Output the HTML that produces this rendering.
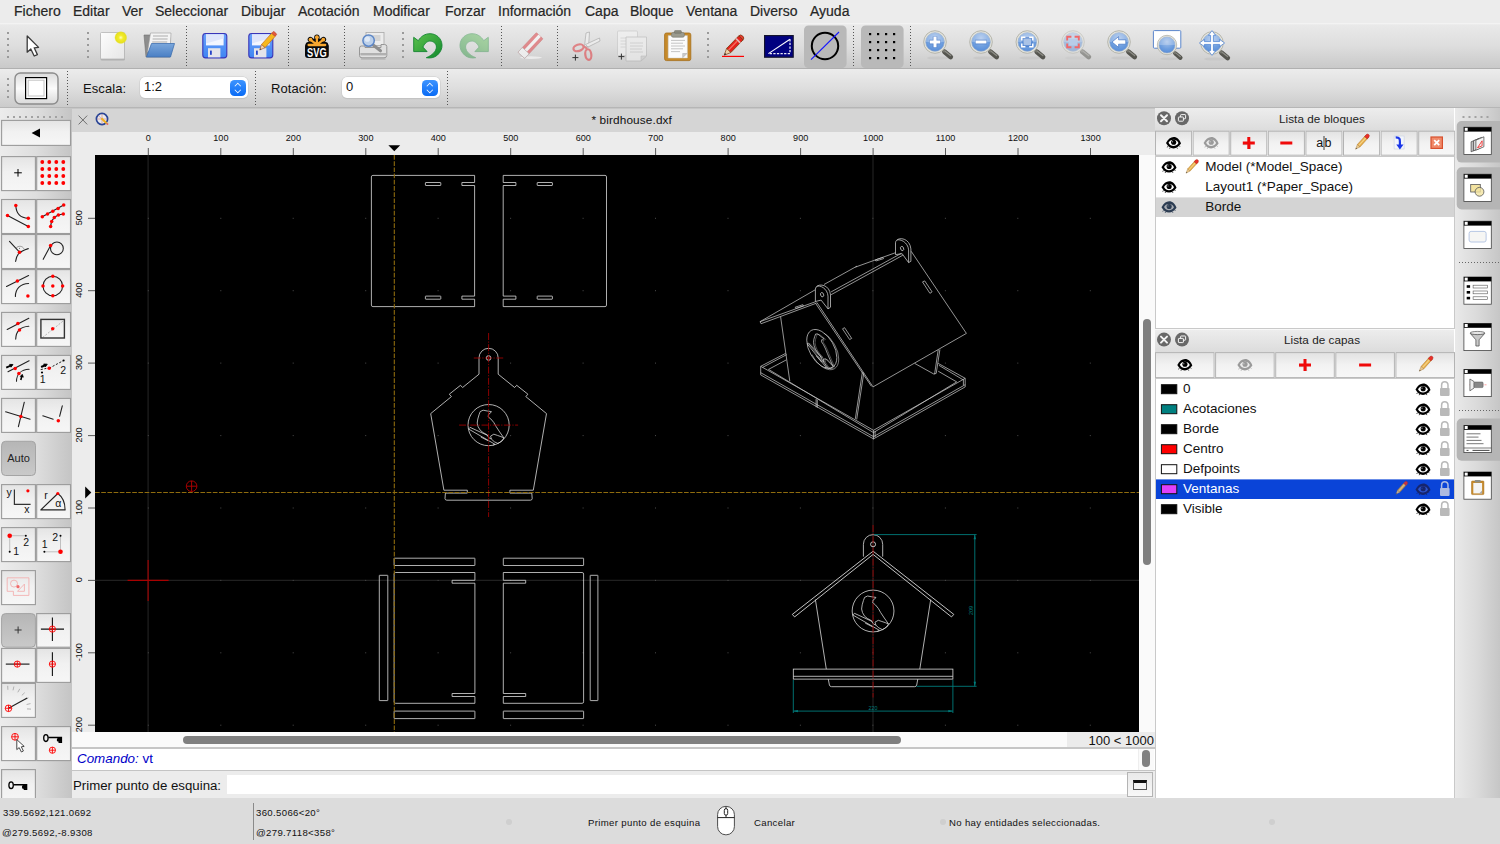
<!DOCTYPE html>
<html><head><meta charset="utf-8"><title>QCAD</title>
<style>
*{box-sizing:border-box;margin:0;padding:0}
html,body{width:1500px;height:844px;overflow:hidden;background:#dcdcdc;font-family:"Liberation Sans",sans-serif;color:#1e1e1e}
.abs,#app *{position:absolute}
#app{position:relative;width:1500px;height:844px;overflow:hidden}
#menubar{left:0;top:0;width:1500px;height:23px;background:#ececec}
#menubar span{top:3px;font-size:14px;letter-spacing:0px;-webkit-text-stroke:0.2px #262626;line-height:17px;color:#262626;white-space:nowrap}
#tb1{left:0;top:23px;width:1500px;height:46px;background:linear-gradient(#f6f6f6 0,#e9e9e9 2px,#dedede 50%,#c9c9c9 100%);border-bottom:1px solid #b0b0b0}
#tb2{left:0;top:69px;width:1500px;height:39px;background:linear-gradient(#ececec,#dedede 50%,#cbcbcb);border-bottom:1px solid #b6b6b6}
.vdots{width:2px;border-left:1.5px dotted #8e8e8e}
#lefttb{left:0;top:108px;width:72px;height:690px;background:linear-gradient(90deg,#ececec,#dedede 50%,#c4c4c4)}
#tabbar{left:72px;top:108px;width:1083px;height:24px;background:#d5d5d5;box-shadow:inset 0 1px 0 #c6c6c6}
#rulerT{left:72px;top:132px;width:1083px;height:23px;background:#ececec}
#rulerL{left:72px;top:155px;width:23px;height:577px;background:#ececec}
#canvas{left:95px;top:155px;width:1044px;height:577px;background:#000}
#vscroll{left:1139px;top:155px;width:16px;height:577px;background:#fafafa}
#hscroll{left:72px;top:732px;width:1083px;height:17px;background:#fafafa}
#rightpanel{left:1155px;top:108px;width:299.5px;height:690px;background:#fff}
#righttb{left:1454.5px;top:108px;width:45.5px;height:690px;background:linear-gradient(90deg,#e9e9e9,#dadada 50%,#c6c6c6)}
#status{left:0;top:798px;width:1500px;height:46px;background:#dcdcdc}

#tb2 span{position:absolute}
#tb2>span{top:12px !important}
.combo{height:21px;background:#fff;border-radius:5px;box-shadow:0 0 0 0.5px #c9c9c9,0 1px 1px rgba(0,0,0,.12)}
.combo span{left:4px;top:2px;font-size:13px;line-height:15px;color:#111}
.combo i{right:2px;top:3px;width:16px;height:16px;border-radius:4.5px;background:linear-gradient(#3d94ff,#0a6cf5)}
.combo i:before{content:"";position:absolute;left:4.6px;top:3.2px;width:4.6px;height:4.6px;border-left:1.6px solid #fff;border-top:1.6px solid #fff;transform:rotate(45deg) scale(.78)}
.combo i:after{content:"";position:absolute;left:4.6px;top:7px;width:4.6px;height:4.6px;border-right:1.6px solid #fff;border-bottom:1.6px solid #fff;transform:rotate(45deg) scale(.78)}

.st{font-size:9.6px;line-height:12px;color:#111;white-space:nowrap;letter-spacing:0.34px;margin-top:1.2px}
.dot{width:6px;height:6px;border-radius:3px;background:#cfcfcf}
.rt{font-size:9.5px;color:#111;white-space:nowrap}
</style></head><body>
<div id="app">
<div id="menubar">
<span style="left:14px">Fichero</span><span style="left:73px">Editar</span><span style="left:122px">Ver</span><span style="left:155px">Seleccionar</span><span style="left:241px">Dibujar</span><span style="left:298px">Acotación</span><span style="left:373px">Modificar</span><span style="left:445px">Forzar</span><span style="left:498px">Información</span><span style="left:585px">Capa</span><span style="left:630px">Bloque</span><span style="left:686px">Ventana</span><span style="left:750px">Diverso</span><span style="left:810px">Ayuda</span>
</div>
<div id="tb1"><svg style="left:0;top:0" width="1500" height="46" viewBox="0 23 1500 46">
<defs>
<linearGradient id="gPaper" x1="0" y1="0" x2="1" y2="1"><stop offset="0" stop-color="#fdfdfd"/><stop offset="1" stop-color="#e6e6e6"/></linearGradient>
<linearGradient id="gFolder" x1="0" y1="0" x2="0" y2="1"><stop offset="0" stop-color="#7aa7dc"/><stop offset="1" stop-color="#4a7fc4"/></linearGradient>
<linearGradient id="gDisk" x1="0" y1="0" x2="0" y2="1"><stop offset="0" stop-color="#6aa2fb"/><stop offset="1" stop-color="#3f84f2"/></linearGradient>
<radialGradient id="gLens" cx="0.5" cy="0.3" r="0.8"><stop offset="0" stop-color="#a8c3ea"/><stop offset="0.55" stop-color="#6f9fdf"/><stop offset="1" stop-color="#4f86d6"/></radialGradient>
<radialGradient id="gGlow"><stop offset="0" stop-color="#ffffc0"/><stop offset="0.35" stop-color="#f3ec2a"/><stop offset="0.8" stop-color="#e6e020"/><stop offset="1" stop-color="#e6e020" stop-opacity="0"/></radialGradient>
<linearGradient id="gUndo" x1="0" y1="0" x2="1" y2="1"><stop offset="0" stop-color="#5cc24c"/><stop offset="1" stop-color="#138a2e"/></linearGradient>
<g id="mag">
  <ellipse cx="3" cy="16" rx="11" ry="1.6" fill="#888" opacity="0.13"/>
  <path d="M9.6 9.8 L15.6 14.8" stroke="#55554f" stroke-width="5" stroke-linecap="round"/><path d="M7 7.2 L10 9.8" stroke="#77776f" stroke-width="2.6"/>
  <path d="M10.4 9.4 L15.6 13.6" stroke="#8d8d86" stroke-width="1.3" stroke-linecap="round"/>
  <circle cx="0" cy="0" r="11.3" fill="#e4e4dc" stroke="#a9a99f" stroke-width="0.8"/>
  <circle cx="0" cy="0" r="9.3" fill="url(#gLens)" stroke="#8fa6c8" stroke-width="0.6"/>
  <path d="M-9.3 0 A9.3 9.3 0 0 1 9.3 0 Z" fill="#fff" opacity="0.22"/>
</g>
<g id="hdl"><rect x="0" y="0" width="2" height="2"/><rect x="0" y="6" width="2" height="2"/><rect x="0" y="12" width="2" height="2"/><rect x="0" y="18" width="2" height="2"/><rect x="0" y="24" width="2" height="2"/></g>
</defs>
<!-- handles -->
<g fill="#9a9a9a"><use href="#hdl" x="7" y="32"/><use href="#hdl" x="87" y="32"/><use href="#hdl" x="402" y="32"/><use href="#hdl" x="707" y="32"/></g>
<!-- separators -->
<g stroke="#555" stroke-width="1" stroke-dasharray="1 2"><path d="M186.5 26v40M288.5 26v40M344.5 26v40M501.5 26v40M557.5 26v40M853.5 26v40M910.5 26v40"/></g>
<!-- arrow -->
<path d="M27.2 36 L27.2 52.2 L30.8 49 L34.2 56 L37.4 54.6 L34.2 47.8 L38.6 47.4 Z" fill="#fff" stroke="#3a3a3a" stroke-width="1.3" stroke-linejoin="round"/>
<!-- new -->
<rect x="100.5" y="33" width="24.5" height="27.5" rx="1.5" fill="#9a9a9a" opacity="0.6"/>
<rect x="100.5" y="32.5" width="24" height="26.5" rx="1" fill="url(#gPaper)" stroke="#b5b5b5" stroke-width="0.8"/>
<circle cx="120.8" cy="37.6" r="6.6" fill="url(#gGlow)"/>
<!-- open -->
<path d="M144 35 L154 35 L156 37.5 L170 37.5 L170 57 L146 57 Z" fill="#8d8d8d" stroke="#6e6e6e" stroke-width="0.6"/>
<path d="M150.5 33 L171 33 L170 52 L147.5 52 Z" fill="#f4f4f4" stroke="#9a9a9a" stroke-width="0.6"/>
<path d="M153 36h15M152.6 39h15M152.2 42h15" stroke="#c4c4c4" stroke-width="1.4"/>
<path d="M151.5 43.5 L174.5 43.5 L170.5 57 L146.5 57 Z" fill="url(#gFolder)" stroke="#3f6fae" stroke-width="0.8" stroke-linejoin="round"/>
<!-- save -->
<g id="disk">
<rect x="202.8" y="33.5" width="24" height="24.4" rx="2.8" fill="url(#gDisk)" stroke="#3a35b8" stroke-width="1.1"/>
<rect x="206" y="34.4" width="17.6" height="11" fill="#f3f6ff"/>
<path d="M206 34.4h17.6v4l-17.6 5z" fill="#dfe6fb"/>
<rect x="208" y="48.2" width="12.4" height="9.2" fill="#e4e4ea"/>
<rect x="210" y="50.6" width="1.8" height="4.2" fill="#2743c8"/>
</g>
<!-- save as -->
<use href="#disk" x="46"/>
<g transform="translate(265.3,43.8) rotate(42) scale(1.02)">
<rect x="-2.3" y="-12" width="4.6" height="15" fill="#f6b81e" stroke="#c9761a" stroke-width="0.7"/>
<rect x="-2.3" y="-14.6" width="4.6" height="2.8" rx="1" fill="#e25a3c" stroke="#b83c24" stroke-width="0.5"/>
<path d="M-2.3 3 L0 8.2 L2.3 3 Z" fill="#f0d6b0" stroke="#b05a2a" stroke-width="0.6"/>
<path d="M-0.7 6.4 L0 8.2 L0.7 6.4 Z" fill="#333"/>
</g>
<!-- svg icon -->
<g>
<rect x="305" y="43.6" width="23.8" height="14.4" rx="3" fill="#0a0a0a"/>
<g stroke="#0a0a0a" stroke-width="5.4" stroke-linecap="round"><path d="M316.9 45 V37.3M316.9 45 L310.4 39.6M316.9 45 L323.4 39.6M316.9 45 L308.3 44.6M316.9 45 L325.5 44.6"/></g>
<g stroke="#f8a72f" stroke-width="2.3" stroke-linecap="round"><path d="M316.9 44.6 V37.3M316.9 44.6 L310.6 39.8M316.9 44.6 L323.2 39.8M308.6 45 H325.2"/></g>
<circle cx="316.9" cy="37.2" r="1.9" fill="#f8a72f"/><circle cx="310.5" cy="39.7" r="1.9" fill="#f8a72f"/><circle cx="323.3" cy="39.7" r="1.9" fill="#f8a72f"/>
<text x="316.9" y="57.2" font-family="Liberation Sans" font-weight="bold" font-size="13" text-anchor="middle" fill="#fff" textLength="19.6" lengthAdjust="spacingAndGlyphs">SVG</text>
</g>
<!-- print preview -->
<g>
<rect x="366" y="32.4" width="18" height="13" fill="#ececec" stroke="#a8a8a8" stroke-width="0.8"/>
<rect x="369.5" y="35" width="11" height="6" fill="#d4d4d4"/>
<path d="M361.5 46 Q359.5 46 359.5 48 L359.5 55.5 Q359.5 57.8 362 57.8 L384 57.8 Q386.8 57.8 386.8 55.5 L386.8 46.5 Q386.8 44.5 384.5 44.5 L381 44.5 L381 47.5 L365 47.5 L365 46 Z" fill="#e0e0e0" stroke="#8f8f8f" stroke-width="0.9"/>
<path d="M360.4 54.2 H386" stroke="#b0b0b0" stroke-width="2.4"/><path d="M361 59 H385.5" stroke="#9a9a9a" stroke-width="1.2" opacity=".6"/>
<path d="M372.5 44.5 L380.5 50.8" stroke="#8e8e8e" stroke-width="3" stroke-linecap="round"/>
<circle cx="368.6" cy="40.6" r="5.7" fill="#bcd0ea" stroke="#5c86c6" stroke-width="1.5"/>
<circle cx="367.4" cy="39.2" r="2.6" fill="#dfe9f6"/>
</g>
<!-- undo -->
<path d="M413.7 37.3 L413.7 51.6 L427.1 51.6 L422.9 47.1 C425 42.5 428 41 430.2 41.1 C434 41.3 436.6 44 436.4 47.2 C436.2 51.5 432 55.5 426.3 57.7 C430 58.4 434.5 57.8 437.5 55 C440.6 52 442.2 48.5 442 45 C441.6 38 436 33.7 430 33.7 C424.8 33.7 420.8 36.5 418.3 40.7 Z" fill="url(#gUndo)" stroke="#128530" stroke-width="0.9" stroke-linejoin="round"/>
<!-- redo -->
<g transform="translate(902,0) scale(-1,1)" opacity="0.42">
<path d="M413.7 37.3 L413.7 51.6 L427.1 51.6 L422.9 47.1 C425 42.5 428 41 430.2 41.1 C434 41.3 436.6 44 436.4 47.2 C436.2 51.5 432 55.5 426.3 57.7 C430 58.4 434.5 57.8 437.5 55 C440.6 52 442.2 48.5 442 45 C441.6 38 436 33.7 430 33.7 C424.8 33.7 420.8 36.5 418.3 40.7 Z" fill="url(#gUndo)" stroke="#128530" stroke-width="0.9" stroke-linejoin="round"/>
</g>
<!-- eraser -->
<g opacity="0.55">
<ellipse cx="531" cy="57.6" rx="11" ry="1.3" fill="#fff"/>
<g transform="translate(530.5,45.5) rotate(-47)">
<rect x="-13.5" y="-4.6" width="27" height="9.2" rx="1" fill="#e0454a" stroke="#b33" stroke-width="0.5"/>
<rect x="-7" y="-1.6" width="20.5" height="3.2" fill="#fff"/>
<rect x="-13.5" y="-4.6" width="6.5" height="9.2" rx="1" fill="#fff" stroke="#999" stroke-width="0.6"/>
</g>
</g>
<!-- cut -->
<g opacity="0.6">
<path d="M586 33 L589.5 32 L588.5 47 L584.5 46.5 Z" fill="#f4f4f4" stroke="#8a8a8a" stroke-width="0.7"/>
<path d="M599.5 38 L600 41 L588 47 L585.5 44.5 Z" fill="#f4f4f4" stroke="#8a8a8a" stroke-width="0.7"/>
<g fill="none" stroke="#e0474c" stroke-width="2.2"><ellipse cx="578.5" cy="47.8" rx="5.2" ry="3.2" transform="rotate(-18 578.5 47.8)"/><ellipse cx="588.3" cy="54.6" rx="3" ry="5.4" transform="rotate(-8 588.3 54.6)"/><path d="M583.4 46.4 L587.2 48.6"/></g>
</g>
<path d="M572.4 57.6h6M575.4 54.6v6" stroke="#333" stroke-width="1"/>
<!-- copy -->
<g opacity="0.55">
<rect x="617.5" y="31" width="20" height="24.5" rx="1" fill="#f6f6f6" stroke="#b4b4b4" stroke-width="0.7"/>
<path d="M620.5 38h7M620.5 41h7M620.5 44h7M620.5 47h5" stroke="#c8c8c8" stroke-width="0.9"/>
<path d="M626 37 L646.5 37 L646.5 56 L641 61 L626 61 Z" fill="#f2f2f2" stroke="#a8a8a8" stroke-width="0.8" stroke-linejoin="round"/>
<path d="M641 61 L641 56 L646.5 56 Z" fill="#cfcfcf" stroke="#a8a8a8" stroke-width="0.6"/>
<path d="M630 43h13M630 46h13M630 49h12M630 52h13" stroke="#bdbdbd" stroke-width="0.9"/>
</g>
<path d="M618.4 56.6h6M621.4 53.6v6" stroke="#333" stroke-width="1"/>
<!-- paste -->
<g>
<rect x="664.6" y="33" width="26.2" height="27.6" rx="1.8" fill="#c68a2a" stroke="#a66d18" stroke-width="0.8"/>
<path d="M668.2 35.6 H687.4 V58 H668.2 Z" fill="#fbfbfb" stroke="#c9c9c9" stroke-width="0.5"/>
<path d="M671 40.4h14M671 43.2h12M671 46h14M671 48.8h12M671 51.6h9" stroke="#bdbdbd" stroke-width="0.9"/>
<path d="M682.6 58 L687.4 58 L687.4 53.2 Z M682.6 53.2 H687.4 V58 H682.6Z" fill="#9c9c9c"/>
<path d="M682.6 58 L682.6 53.2 L687.4 53.2 Z" fill="#c9c9c9"/>
<rect x="671.4" y="32.6" width="13" height="4.6" rx="1.6" fill="#9b9b8f" stroke="#77776c" stroke-width="0.6"/>
<rect x="674.4" y="30.6" width="7" height="2.6" rx="0.8" fill="#8a8a7e" stroke="#6a6a60" stroke-width="0.5"/>
</g>
<!-- pencil (red) -->
<path d="M722 56.4 H744" stroke="#f00" stroke-width="1.2"/>
<g transform="translate(732.4,46.7) rotate(44) scale(0.95)">
<rect x="-3.1" y="-13" width="6.2" height="18.6" fill="#e4201b" stroke="#7c3a12" stroke-width="0.8"/>
<path d="M-3.1 -13 A3.1 2.6 0 0 1 3.1 -13 Z" fill="#ee3a32" stroke="#7c3a12" stroke-width="0.8"/>
<rect x="-3.1" y="-9.6" width="6.2" height="1.8" fill="#e8b3b0"/>
<rect x="-1.2" y="-7.4" width="1.5" height="13" fill="#f46a5c"/>
<path d="M-3.1 5.6 L0 12.4 L3.1 5.6 Z" fill="#edd1a8" stroke="#7c3a12" stroke-width="0.7"/>
<path d="M-1 10.2 L0 12.4 L1 10.2 Z" fill="#222"/>
</g>
<!-- blue rect -->
<rect x="764.6" y="35.6" width="28.6" height="21.6" fill="#000080" stroke="#14142e" stroke-width="1.2"/>
<path d="M768.4 53.6 L790 39.2" stroke="#fff" stroke-width="1.1"/>
<path d="M790 39.2 V53.6 H768.4" stroke="#e6e6f4" stroke-width="1.3" stroke-dasharray="2.3 1.3" fill="none"/>
<!-- pressed buttons -->
<rect x="804" y="25.4" width="42.6" height="42.6" rx="4.5" fill="#b9b9b9"/>
<rect x="861" y="25.4" width="42.6" height="42.6" rx="4.5" fill="#b9b9b9"/>
<circle cx="825" cy="46" r="13.2" fill="none" stroke="#000" stroke-width="2"/>
<path d="M811 59.6 L839 32" stroke="#1515ff" stroke-width="1.1"/>
<g fill="#000"><rect x="869" y="33" width="2.2" height="2.2"/><rect x="877" y="33" width="2.2" height="2.2"/><rect x="885" y="33" width="2.2" height="2.2"/><rect x="893" y="33" width="2.2" height="2.2"/><rect x="869" y="41" width="2.2" height="2.2"/><rect x="877" y="41" width="2.2" height="2.2"/><rect x="885" y="41" width="2.2" height="2.2"/><rect x="893" y="41" width="2.2" height="2.2"/><rect x="869" y="49" width="2.2" height="2.2"/><rect x="877" y="49" width="2.2" height="2.2"/><rect x="885" y="49" width="2.2" height="2.2"/><rect x="893" y="49" width="2.2" height="2.2"/><rect x="869" y="57" width="2.2" height="2.2"/><rect x="877" y="57" width="2.2" height="2.2"/><rect x="885" y="57" width="2.2" height="2.2"/><rect x="893" y="57" width="2.2" height="2.2"/></g>
<!-- zoom in -->
<use href="#mag" x="935" y="42"/>
<path d="M929.4 42 H940.6 M935 36.4 V47.6" stroke="#2f62b8" stroke-width="4.6" opacity="0.55"/>
<path d="M929.8 42 H940.2 M935 36.8 V47.2" stroke="#fff" stroke-width="3"/>
<!-- zoom out -->
<use href="#mag" x="981" y="42"/>
<path d="M975.2 42 H986.8" stroke="#2f62b8" stroke-width="4.6" opacity="0.55"/>
<path d="M975.6 42 H986.4" stroke="#fff" stroke-width="3"/>
<!-- zoom fit -->
<use href="#mag" x="1027.3" y="42"/>
<rect x="1021.6" y="37" width="11.4" height="10" fill="#3e72c6" opacity="0.55"/>
<rect x="1023.6" y="38.8" width="7.4" height="6.4" fill="#a9c2e6"/>
<path d="M1021.8 40.4 V37.2 H1025.4 M1029.2 37.2 H1032.8 V40.4 M1032.8 43.6 V46.8 H1029.2 M1025.4 46.8 H1021.8 V43.6" fill="none" stroke="#fff" stroke-width="1.5"/>
<!-- zoom sel (disabled) -->
<g opacity="0.5"><use href="#mag" x="1073" y="42"/></g>
<rect x="1069" y="38.6" width="8" height="6.8" fill="#b8cce8"/>
<path d="M1067.2 40.6 V36.8 H1071.4 M1074.6 36.8 H1078.8 V40.6 M1078.8 43.4 V47.2 H1074.6 M1071.4 47.2 H1067.2 V43.4" fill="none" stroke="#f0686a" stroke-width="1.9"/>
<!-- zoom back -->
<use href="#mag" x="1119" y="42"/>
<path d="M1112 42 L1118.6 36.6 L1118.6 39.8 L1125.8 39.8 L1125.8 44.2 L1118.6 44.2 L1118.6 47.4 Z" fill="#fff" stroke="#3f72c4" stroke-width="0.7" stroke-linejoin="round"/>
<!-- zoom window -->
<rect x="1153.4" y="30.6" width="27.4" height="17.6" rx="1" fill="#fff" stroke="#5b86cc" stroke-width="1"/>
<use href="#mag" x="1167" y="45" transform="translate(1167,45) scale(0.86) translate(-1167,-45)"/>
<!-- pan -->
<use href="#mag" x="1212" y="43"/>
<g fill="#fff" stroke="#3f78d0" stroke-width="0.7" stroke-linejoin="round">
<path d="M1212 30.6 L1215.6 35.4 L1213.4 35.4 L1213.4 41.6 L1219.6 41.6 L1219.6 39.4 L1224.6 43 L1219.6 46.6 L1219.6 44.4 L1213.4 44.4 L1213.4 50.6 L1215.6 50.6 L1212 55.4 L1208.4 50.6 L1210.6 50.6 L1210.6 44.4 L1204.4 44.4 L1204.4 46.6 L1199.4 43 L1204.4 39.4 L1204.4 41.6 L1210.6 41.6 L1210.6 35.4 L1208.4 35.4 Z"/>
</g>
</svg>
</div>
<div id="tb2">
<svg style="left:0;top:0" width="1500" height="39" viewBox="0 69 1500 39">
<defs><linearGradient id="gBtn2" x1="0" y1="0" x2="0" y2="1"><stop offset="0" stop-color="#dcdcdc"/><stop offset="0.5" stop-color="#fbfbfb"/><stop offset="1" stop-color="#d9d9d9"/></linearGradient></defs>
<g fill="#9a9a9a"><rect x="7" y="78" width="2" height="2"/><rect x="7" y="84" width="2" height="2"/><rect x="7" y="90" width="2" height="2"/><rect x="7" y="96" width="2" height="2"/></g>
<rect x="15" y="73" width="43" height="31" rx="5.5" fill="url(#gBtn2)" stroke="#8c8c8c" stroke-width="1.4"/>
<rect x="25.6" y="77.6" width="21" height="21" fill="#fff" stroke="#000" stroke-width="1.2"/>
<rect x="28.2" y="80.2" width="15.8" height="15.8" fill="none" stroke="#c4c4c4" stroke-width="1"/>
<g stroke="#555" stroke-width="1" stroke-dasharray="1 2"><path d="M67.5 71v34M255.5 71v34M447.5 71v34"/></g>
</svg>
<span style="left:83px;top:81px;font-size:13px;line-height:15px;color:#111;letter-spacing:0.1px">Escala:</span>
<span style="left:271px;top:81px;font-size:13px;line-height:15px;color:#111;letter-spacing:0.1px">Rotación:</span>
<div class="combo" style="left:140px;top:8px;width:108px"><span>1:2</span><i></i></div>
<div class="combo" style="left:342px;top:8px;width:98px"><span>0</span><i></i></div>
</div>
<div id="lefttb"><!--LEFTS--><svg style="left:0;top:0" width="72" height="690" viewBox="0 108 72 690">
<defs><linearGradient id="gB" x1="0" y1="0" x2="0" y2="1"><stop offset="0" stop-color="#e4e4e4"/><stop offset="0.45" stop-color="#f1f1f1"/><stop offset="1" stop-color="#f6f6f6"/></linearGradient><linearGradient id="gBP" x1="0" y1="0" x2="0" y2="1"><stop offset="0" stop-color="#b6b6b6"/><stop offset="1" stop-color="#c9c9c9"/></linearGradient></defs>
<g fill="#a2a2a2"><rect x="7" y="116" width="2" height="2"/><rect x="13" y="116" width="2" height="2"/><rect x="19" y="116" width="2" height="2"/><rect x="25" y="116" width="2" height="2"/><rect x="31" y="116" width="2" height="2"/><rect x="37" y="116" width="2" height="2"/><rect x="43" y="116" width="2" height="2"/><rect x="49" y="116" width="2" height="2"/><rect x="55" y="116" width="2" height="2"/><rect x="61" y="116" width="2" height="2"/></g>
<rect x="1.6" y="120.4" width="68.9" height="25.0" fill="url(#gB)" stroke="#9b9b9b" stroke-width="1.1"/>
<path d="M31.6 133 L40 128.6 L40 137.4 Z" fill="#000"/>
<rect x="1.6" y="156.6" width="33.8" height="34.0" fill="url(#gB)" stroke="#9b9b9b" stroke-width="1.1"/>
<rect x="36.7" y="156.6" width="33.8" height="34.0" fill="url(#gB)" stroke="#9b9b9b" stroke-width="1.1"/>
<g transform="translate(1.6,156.6)"><path d="M12.6 16.2H20.2M16.4 12.4V20" stroke="#000" stroke-width="1"/></g>
<g transform="translate(36.7,156.6)"><circle cx="5.6" cy="5.4" r="1.90" fill="#ff0000"/><circle cx="5.6" cy="12.4" r="1.90" fill="#ff0000"/><circle cx="5.6" cy="19.4" r="1.90" fill="#ff0000"/><circle cx="5.6" cy="26.4" r="1.90" fill="#ff0000"/><circle cx="12.6" cy="5.4" r="1.90" fill="#ff0000"/><circle cx="12.6" cy="12.4" r="1.90" fill="#ff0000"/><circle cx="12.6" cy="19.4" r="1.90" fill="#ff0000"/><circle cx="12.6" cy="26.4" r="1.90" fill="#ff0000"/><circle cx="19.6" cy="5.4" r="1.90" fill="#ff0000"/><circle cx="19.6" cy="12.4" r="1.90" fill="#ff0000"/><circle cx="19.6" cy="19.4" r="1.90" fill="#ff0000"/><circle cx="19.6" cy="26.4" r="1.90" fill="#ff0000"/><circle cx="26.6" cy="5.4" r="1.90" fill="#ff0000"/><circle cx="26.6" cy="12.4" r="1.90" fill="#ff0000"/><circle cx="26.6" cy="19.4" r="1.90" fill="#ff0000"/><circle cx="26.6" cy="26.4" r="1.90" fill="#ff0000"/></g>
<rect x="1.6" y="199.5" width="33.8" height="34.0" fill="url(#gB)" stroke="#9b9b9b" stroke-width="1.1"/>
<rect x="36.7" y="199.5" width="33.8" height="34.0" fill="url(#gB)" stroke="#9b9b9b" stroke-width="1.1"/>
<g transform="translate(1.6,199.5)"><path d="M5.9 16 L26.7 27.1M14.2 6 C14.6 14 19 18.6 26.7 18.7" stroke="#222" stroke-width="1.1" fill="none" stroke-linecap="round"/><circle cx="14.2" cy="6.0" r="1.75" fill="#ff0000"/><circle cx="5.9" cy="16.0" r="1.75" fill="#ff0000"/><circle cx="26.7" cy="18.7" r="1.75" fill="#ff0000"/><circle cx="26.7" cy="27.1" r="1.75" fill="#ff0000"/></g>
<g transform="translate(36.7,199.5)"><path d="M5.6 17.2 L27 5.6M13.9 27.1 C14.6 19 19.5 15 26.6 14.5" stroke="#222" stroke-width="1.1" fill="none" stroke-linecap="round"/><circle cx="5.6" cy="17.2" r="1.75" fill="#ff0000"/><circle cx="10.8" cy="14.5" r="1.75" fill="#ff0000"/><circle cx="16.1" cy="11.7" r="1.75" fill="#ff0000"/><circle cx="21.4" cy="8.9" r="1.75" fill="#ff0000"/><circle cx="27.0" cy="5.6" r="1.75" fill="#ff0000"/><circle cx="13.9" cy="27.1" r="1.75" fill="#ff0000"/><circle cx="15.0" cy="22.1" r="1.75" fill="#ff0000"/><circle cx="17.6" cy="17.9" r="1.75" fill="#ff0000"/><circle cx="21.7" cy="15.6" r="1.75" fill="#ff0000"/><circle cx="26.6" cy="14.5" r="1.75" fill="#ff0000"/></g>
<rect x="1.6" y="234.5" width="33.8" height="34.0" fill="url(#gB)" stroke="#9b9b9b" stroke-width="1.1"/>
<rect x="36.7" y="234.5" width="33.8" height="34.0" fill="url(#gB)" stroke="#9b9b9b" stroke-width="1.1"/>
<g transform="translate(1.6,234.5)"><path d="M7.9 6.8 L17.9 17.7M14 26.9 C14.6 21 17 17 26.7 14.1" stroke="#222" stroke-width="1.1" fill="none" stroke-linecap="round"/><path d="M14.7 13.4 C16.5 11 21 11.2 22.4 14.4" stroke="#444" stroke-width="0.5" fill="none"/><circle cx="17.9" cy="13.7" r="0.50" fill="#444"/><circle cx="17.9" cy="17.7" r="1.75" fill="#ff0000"/></g>
<g transform="translate(36.7,234.5)"><circle cx="20.2" cy="13.9" r="6.4" stroke="#222" stroke-width="1.1" fill="none" stroke-linecap="round"/><path d="M6.5 24.8 L13.9 10.9" stroke="#222" stroke-width="1.1" fill="none" stroke-linecap="round"/><circle cx="13.9" cy="10.9" r="1.75" fill="#ff0000"/></g>
<rect x="1.6" y="269.6" width="33.8" height="34.0" fill="url(#gB)" stroke="#9b9b9b" stroke-width="1.1"/>
<rect x="36.7" y="269.6" width="33.8" height="34.0" fill="url(#gB)" stroke="#9b9b9b" stroke-width="1.1"/>
<g transform="translate(1.6,269.6)"><path d="M4.9 16.9 L27 6M13.8 26.9 C13.8 19 19 14.2 27 13.9" stroke="#222" stroke-width="1.1" fill="none" stroke-linecap="round"/><circle cx="15.8" cy="11.5" r="1.75" fill="#ff0000"/><circle cx="26.3" cy="26.3" r="1.75" fill="#ff0000"/></g>
<g transform="translate(36.7,269.6)"><circle cx="16.1" cy="16.4" r="9.8" stroke="#222" stroke-width="1.1" fill="none" stroke-linecap="round"/><circle cx="16.1" cy="16.4" r="1.75" fill="#ff0000"/><circle cx="16.1" cy="6.6" r="1.75" fill="#ff0000"/><circle cx="16.1" cy="26.2" r="1.75" fill="#ff0000"/><circle cx="6.3" cy="16.4" r="1.75" fill="#ff0000"/><circle cx="25.9" cy="16.4" r="1.75" fill="#ff0000"/></g>
<rect x="1.6" y="312.4" width="33.8" height="34.0" fill="url(#gB)" stroke="#9b9b9b" stroke-width="1.1"/>
<rect x="36.7" y="312.4" width="33.8" height="34.0" fill="url(#gB)" stroke="#9b9b9b" stroke-width="1.1"/>
<g transform="translate(1.6,312.4)"><path d="M5.6 17.1 L27.2 5.9M14.1 26.7 C14.4 19 19 14.4 27.2 13.9" stroke="#222" stroke-width="1.1" fill="none" stroke-linecap="round"/><circle cx="16.3" cy="11.2" r="1.75" fill="#ff0000"/><circle cx="17.9" cy="17.6" r="1.75" fill="#ff0000"/></g>
<g transform="translate(36.7,312.4)"><path d="M6 25 L26.2 8.8" stroke="#999" stroke-width="0.7" stroke-dasharray="2 1.4"/><rect x="4.2" y="7" width="23.5" height="18.6" fill="none" stroke="#333" stroke-width="1.4"/><circle cx="16.0" cy="16.3" r="1.75" fill="#ff0000"/></g>
<rect x="1.6" y="355.4" width="33.8" height="34.0" fill="url(#gB)" stroke="#9b9b9b" stroke-width="1.1"/>
<rect x="36.7" y="355.4" width="33.8" height="34.0" fill="url(#gB)" stroke="#9b9b9b" stroke-width="1.1"/>
<g transform="translate(1.6,355.4)"><path d="M6.4 16.3 L27.5 5.4M14.9 25.9 C15 19 19.4 14.2 27.5 13.9" stroke="#222" stroke-width="1.1" fill="none" stroke-linecap="round"/><path d="M4.6 12.2 L10.4 9.6" stroke="#000" stroke-width="1.8"/><path d="M11.4 9.1 L8 9 L9.4 11.8Z" fill="#000" stroke="#000" stroke-width="0.8"/><path d="M19.2 24.6 L20.4 20" stroke="#000" stroke-width="1.6"/><path d="M20.7 18.8 L18.6 21 L21.8 21.8Z" fill="#000" stroke="#000" stroke-width="0.6"/><circle cx="13.6" cy="13.1" r="1.75" fill="#ff0000"/><circle cx="17.3" cy="18.2" r="1.75" fill="#ff0000"/></g>
<g transform="translate(36.7,355.4)"><path d="M12.5 12.8 L26.9 5.1M4 14.2 L9.6 13" stroke="#222" stroke-width="1" stroke-dasharray="2.2 1.6" fill="none"/><path d="M4.4 11.6 L9.4 9.4" stroke="#000" stroke-width="2"/><path d="M10.6 8.8 L7 8.6 L8.6 11.6Z" fill="#000" stroke="#000" stroke-width="0.8"/><circle cx="26.9" cy="5.1" r="1.10" fill="#000"/><circle cx="5.3" cy="17.1" r="1.10" fill="#000"/><circle cx="12.5" cy="12.8" r="1.75" fill="#ff0000"/><text x="26.6" y="18.4" font-size="10.5" text-anchor="middle" fill="#111" font-family="Liberation Sans">2</text><text x="5.9" y="28" font-size="10.5" text-anchor="middle" fill="#111" font-family="Liberation Sans">1</text></g>
<rect x="1.6" y="398.4" width="33.8" height="34.0" fill="url(#gB)" stroke="#9b9b9b" stroke-width="1.1"/>
<rect x="36.7" y="398.4" width="33.8" height="34.0" fill="url(#gB)" stroke="#9b9b9b" stroke-width="1.1"/>
<g transform="translate(1.6,398.4)"><path d="M4 13.4 L28.5 20.8M22.7 3.8 L16.8 28.3" stroke="#222" stroke-width="1.1" fill="none" stroke-linecap="round"/><circle cx="19.2" cy="18.2" r="1.75" fill="#ff0000"/></g>
<g transform="translate(36.7,398.4)"><path d="M6.1 17.4 L16.5 20.8M25.6 7.5 L22.9 17.9" stroke="#222" stroke-width="1.1" fill="none" stroke-linecap="round"/><circle cx="21.6" cy="22.4" r="1.75" fill="#ff0000"/></g>
<rect x="1.6" y="441.3" width="33.9" height="34.2" rx="4" fill="url(#gBP)" stroke="#a4a4a4" stroke-width="1"/>
<text x="18.6" y="462.2" font-size="11" text-anchor="middle" fill="#222" font-family="Liberation Sans">Auto</text>
<rect x="1.6" y="484.6" width="33.8" height="34.0" fill="url(#gB)" stroke="#9b9b9b" stroke-width="1.1"/>
<rect x="36.7" y="484.6" width="33.8" height="34.0" fill="url(#gB)" stroke="#9b9b9b" stroke-width="1.1"/>
<g transform="translate(1.6,484.6)"><path d="M12.8 4.8 V19.7 H29" stroke="#333" stroke-width="1.2" fill="none"/><text x="7.6" y="11.4" font-size="10.5" font-family="Liberation Sans" fill="#111" text-anchor="middle">y</text><text x="25.4" y="28" font-size="10.5" font-family="Liberation Sans" fill="#111" text-anchor="middle">x</text><circle cx="26.3" cy="6.2" r="1.60" fill="#ff0000"/></g>
<g transform="translate(36.7,484.6)"><path d="M21.1 8.9 L4.1 25.3 H28.4 C28.4 18 25.5 12 21.1 8.9 Z" stroke="#222" stroke-width="1.1" fill="none" stroke-linejoin="round"/><text x="9.2" y="14.8" font-size="10.5" font-family="Liberation Sans" fill="#111" text-anchor="middle">r</text><text x="21.6" y="22.2" font-size="10.5" font-family="Liberation Sans" fill="#111" text-anchor="middle">α</text><circle cx="21.1" cy="8.9" r="1.60" fill="#ff0000"/></g>
<rect x="1.6" y="527.6" width="33.8" height="34.0" fill="url(#gB)" stroke="#9b9b9b" stroke-width="1.1"/>
<rect x="36.7" y="527.6" width="33.8" height="34.0" fill="url(#gB)" stroke="#9b9b9b" stroke-width="1.1"/>
<g transform="translate(1.6,527.6)"><path d="M24.2 8.1 H8.1 V24.2" stroke="#aaa" stroke-width="0.7" fill="none"/><circle cx="24.2" cy="8.1" r="1.00" fill="#000"/><circle cx="8.1" cy="24.2" r="1.00" fill="#000"/><circle cx="8.1" cy="8.1" r="2.30" fill="#ff0000"/><text x="24.6" y="18.6" font-size="10.5" font-family="Liberation Sans" fill="#111" text-anchor="middle">2</text><text x="14.6" y="27" font-size="10.5" font-family="Liberation Sans" fill="#111" text-anchor="middle">1</text></g>
<g transform="translate(36.7,527.6)"><path d="M23.8 8.1 V24.2 H7.7" stroke="#aaa" stroke-width="0.7" fill="none"/><circle cx="23.8" cy="8.1" r="1.00" fill="#000"/><circle cx="7.7" cy="24.2" r="1.00" fill="#000"/><circle cx="23.8" cy="24.2" r="2.30" fill="#ff0000"/><text x="18.4" y="13.4" font-size="10.5" font-family="Liberation Sans" fill="#111" text-anchor="middle">2</text><text x="8" y="20.6" font-size="10.5" font-family="Liberation Sans" fill="#111" text-anchor="middle">1</text></g>
<rect x="1.6" y="570.6" width="33.8" height="34.0" fill="url(#gB)" stroke="#9b9b9b" stroke-width="1.1"/>
<g transform="translate(1.6,570.6)"><g stroke="#f3a8a8" stroke-width="0.8" fill="none"><circle cx="12.4" cy="13" r="3.5"/><path d="M5.6 7.2H27.3V24.8H11.8V20.7H5.6Z"/><path d="M15.9 20.7L22.8 13.5V20.7Z"/></g><circle cx="16.4" cy="16.1" r="1.60" fill="#f06a6a"/></g>
<rect x="1.6" y="613.6" width="33.8" height="33.6" rx="4" fill="url(#gBP)" stroke="#a4a4a4" stroke-width="1"/>
<rect x="36.7" y="613.6" width="33.8" height="33.6" fill="url(#gB)" stroke="#9b9b9b" stroke-width="1.1"/>
<g transform="translate(1.6,613.6)"><path d="M13 16.4H20M16.5 12.9V19.9" stroke="#333" stroke-width="1"/></g>
<g transform="translate(36.7,613.6)"><path d="M4.2 15.5H27.3M15.7 3.9V27.5" stroke="#111" stroke-width="1.1"/><g stroke="#ff0000" stroke-width="0.9" fill="none"><circle cx="15.7" cy="15.5" r="3.1"/><path d="M12.6 15.5H18.8M15.7 12.4V18.6"/></g></g>
<rect x="1.6" y="648.4" width="33.8" height="34.0" fill="url(#gB)" stroke="#9b9b9b" stroke-width="1.1"/>
<rect x="36.7" y="648.4" width="33.8" height="34.0" fill="url(#gB)" stroke="#9b9b9b" stroke-width="1.1"/>
<g transform="translate(1.6,648.4)"><path d="M4.2 15.7H27.9" stroke="#111" stroke-width="1.1"/><g stroke="#ff0000" stroke-width="0.9" fill="none"><circle cx="15.7" cy="15.7" r="3.1"/><path d="M12.6 15.7H18.8M15.7 12.6V18.8"/></g></g>
<g transform="translate(36.7,648.4)"><path d="M15.7 3.9V27.7" stroke="#111" stroke-width="1.1"/><g stroke="#ff0000" stroke-width="0.9" fill="none"><circle cx="15.7" cy="15.7" r="3.1"/><path d="M12.6 15.7H18.8M15.7 12.6V18.8"/></g></g>
<rect x="1.6" y="683.4" width="33.8" height="34.0" fill="url(#gB)" stroke="#9b9b9b" stroke-width="1.1"/>
<g transform="translate(1.6,683.4)"><path d="M6.3 6.4L6.1 2.4M11.4 6.9L12.3 3.1M16.2 8.9L18.2 5.4M20.2 12.0L23.1 9.3M23.2 16.2L26.8 14.3M25.0 21.1L28.9 20.2M25.4 25.5L29.4 25.7" stroke="#aaa" stroke-width="0.9"/><path d="M6.9 24.9L25.6 14.5" stroke="#222" stroke-width="1.2"/><g stroke="#ff0000" stroke-width="0.9" fill="none"><circle cx="6.9" cy="24.9" r="3.3"/><path d="M3.6 24.9H10.2M6.9 21.6V28.2"/></g></g>
<rect x="1.6" y="726.6" width="33.8" height="34.0" fill="url(#gB)" stroke="#9b9b9b" stroke-width="1.1"/>
<rect x="36.7" y="726.6" width="33.8" height="34.0" fill="url(#gB)" stroke="#9b9b9b" stroke-width="1.1"/>
<g transform="translate(1.6,726.6)"><g stroke="#ff0000" stroke-width="0.9" fill="none"><circle cx="13.4" cy="10.2" r="3.4"/><path d="M10.0 10.2H16.8M13.4 6.8V13.6"/></g><path d="M15.2 13 L15.2 23 L17.6 21 L19.8 25.4 L21.8 24.4 L19.7 20.2 L22.6 19.8 Z" fill="#fff" stroke="#333" stroke-width="0.9" stroke-linejoin="round"/></g>
<g transform="translate(36.7,726.6)"><ellipse cx="9.2" cy="11.5" rx="2.2" ry="3.4" fill="none" stroke="#000" stroke-width="1.3"/><path d="M11.6 10.9H24.6V15.5H22.6V13.1H21.0V14.5" stroke="#000" stroke-width="1.6" fill="none"/><path d="M20.6 11.3h4.2v3.6h-4.2z" fill="#000"/><g stroke="#ff0000" stroke-width="0.9" fill="none"><circle cx="15.7" cy="23.6" r="3.1"/><path d="M12.6 23.6H18.8M15.7 20.5V26.7"/></g></g>
<rect x="1.6" y="769.6" width="33.8" height="34.0" fill="url(#gB)" stroke="#9b9b9b" stroke-width="1.1"/>
<g transform="translate(1.6,769.6)"><ellipse cx="9.5" cy="15.7" rx="2.2" ry="3.4" fill="none" stroke="#000" stroke-width="1.3"/><path d="M11.9 15.1H24.9V19.7H22.9V17.3H21.3V18.7" stroke="#000" stroke-width="1.6" fill="none"/><path d="M20.9 15.5h4.2v3.6h-4.2z" fill="#000"/></g>
</svg><!--LEFTE--></div>
<div id="tabbar">
<svg style="left:0;top:0" width="1083" height="24" viewBox="72 108 1083 24">
<path d="M78.6 115.6 L87.2 124.4 M87.2 115.6 L78.6 124.4" stroke="#6e6e6e" stroke-width="1"/>
<circle cx="102" cy="119" r="5.6" fill="#e9e9ec" stroke="#2a4596" stroke-width="1.7"/>
<path d="M102 114v10M97 119h10M98.4 115.6l7 7" stroke="#c88" stroke-width="0.6"/>
<path d="M101.4 118.2 L106.6 123.2" stroke="#f0b020" stroke-width="2"/>
<circle cx="107.4" cy="124" r="1" fill="#e86a5a"/>
</svg>
<span style="left:519.5px;top:5.4px;font-size:11.8px;line-height:14px;color:#111;letter-spacing:0.12px;white-space:nowrap">* birdhouse.dxf</span>
</div>
<div id="rulerT"><svg style="left:0;top:0" width="1083" height="23" viewBox="72 132 1083 23"><g stroke="#4a4a4a" stroke-width="0.9"><path d="M148.3 148V155M220.8 148V155M293.3 148V155M365.8 148V155M438.2 148V155M510.7 148V155M583.2 148V155M655.6 148V155M728.1 148V155M800.6 148V155M873.1 148V155M945.5 148V155M1018.0 148V155M1090.5 148V155"/></g><path d="M388.4 145.2 H400.2 L394.3 151.2 Z" fill="#000"/><g font-family="Liberation Sans" font-size="9.1" fill="#111" text-anchor="middle"><text x="148.4" y="141.1">0</text><text x="220.9" y="141.1">100</text><text x="293.4" y="141.1">200</text><text x="365.9" y="141.1">300</text><text x="438.3" y="141.1">400</text><text x="510.8" y="141.1">500</text><text x="583.3" y="141.1">600</text><text x="655.7" y="141.1">700</text><text x="728.2" y="141.1">800</text><text x="800.7" y="141.1">900</text><text x="873.2" y="141.1">1000</text><text x="945.6" y="141.1">1100</text><text x="1018.1" y="141.1">1200</text><text x="1090.6" y="141.1">1300</text></g></svg></div>
<div id="rulerL"><svg style="left:0;top:0" width="23" height="577" viewBox="72 155 23 577"><g stroke="#4a4a4a" stroke-width="0.9"><path d="M88 218.3H95M88 290.7H95M88 363.1H95M88 435.6H95M88 508.0H95M88 580.4H95M88 652.8H95M88 725.2H95"/></g><path d="M85.2 486.4 V498.6 L91.3 492.5 Z" fill="#000"/><g font-family="Liberation Sans" font-size="9.1" fill="#111" text-anchor="middle"><text transform="translate(81.6,217.7) rotate(-90)">500</text><text transform="translate(81.6,290.1) rotate(-90)">400</text><text transform="translate(81.6,362.5) rotate(-90)">300</text><text transform="translate(81.6,435.0) rotate(-90)">200</text><text transform="translate(81.6,507.4) rotate(-90)">100</text><text transform="translate(81.6,579.8) rotate(-90)">0</text><text transform="translate(81.6,652.2) rotate(-90)">-100</text><text transform="translate(81.6,724.6) rotate(-90)">200</text></g></svg></div>
<div id="canvas"><!--CANVASS--><svg style="left:0;top:0" width="1044" height="577" viewBox="95 155 1044 577">
<rect x="95" y="155" width="1044" height="577" fill="#000"/>
<path d="M148.1 155V732M873 155V732M95 580.4H1139" stroke="#202020" stroke-width="1.2"/>
<g fill="#4c4c4c"><rect x="147.8" y="724.7" width="1" height="1"/><rect x="147.8" y="652.3" width="1" height="1"/><rect x="147.8" y="579.9" width="1" height="1"/><rect x="147.8" y="507.5" width="1" height="1"/><rect x="147.8" y="435.1" width="1" height="1"/><rect x="147.8" y="362.6" width="1" height="1"/><rect x="147.8" y="290.2" width="1" height="1"/><rect x="147.8" y="217.8" width="1" height="1"/><rect x="220.3" y="724.7" width="1" height="1"/><rect x="220.3" y="652.3" width="1" height="1"/><rect x="220.3" y="579.9" width="1" height="1"/><rect x="220.3" y="507.5" width="1" height="1"/><rect x="220.3" y="435.1" width="1" height="1"/><rect x="220.3" y="362.6" width="1" height="1"/><rect x="220.3" y="290.2" width="1" height="1"/><rect x="220.3" y="217.8" width="1" height="1"/><rect x="292.7" y="724.7" width="1" height="1"/><rect x="292.7" y="652.3" width="1" height="1"/><rect x="292.7" y="579.9" width="1" height="1"/><rect x="292.7" y="507.5" width="1" height="1"/><rect x="292.7" y="435.1" width="1" height="1"/><rect x="292.7" y="362.6" width="1" height="1"/><rect x="292.7" y="290.2" width="1" height="1"/><rect x="292.7" y="217.8" width="1" height="1"/><rect x="365.2" y="724.7" width="1" height="1"/><rect x="365.2" y="652.3" width="1" height="1"/><rect x="365.2" y="579.9" width="1" height="1"/><rect x="365.2" y="507.5" width="1" height="1"/><rect x="365.2" y="435.1" width="1" height="1"/><rect x="365.2" y="362.6" width="1" height="1"/><rect x="365.2" y="290.2" width="1" height="1"/><rect x="365.2" y="217.8" width="1" height="1"/><rect x="437.6" y="724.7" width="1" height="1"/><rect x="437.6" y="652.3" width="1" height="1"/><rect x="437.6" y="579.9" width="1" height="1"/><rect x="437.6" y="507.5" width="1" height="1"/><rect x="437.6" y="435.1" width="1" height="1"/><rect x="437.6" y="362.6" width="1" height="1"/><rect x="437.6" y="290.2" width="1" height="1"/><rect x="437.6" y="217.8" width="1" height="1"/><rect x="510.1" y="724.7" width="1" height="1"/><rect x="510.1" y="652.3" width="1" height="1"/><rect x="510.1" y="579.9" width="1" height="1"/><rect x="510.1" y="507.5" width="1" height="1"/><rect x="510.1" y="435.1" width="1" height="1"/><rect x="510.1" y="362.6" width="1" height="1"/><rect x="510.1" y="290.2" width="1" height="1"/><rect x="510.1" y="217.8" width="1" height="1"/><rect x="582.6" y="724.7" width="1" height="1"/><rect x="582.6" y="652.3" width="1" height="1"/><rect x="582.6" y="579.9" width="1" height="1"/><rect x="582.6" y="507.5" width="1" height="1"/><rect x="582.6" y="435.1" width="1" height="1"/><rect x="582.6" y="362.6" width="1" height="1"/><rect x="582.6" y="290.2" width="1" height="1"/><rect x="582.6" y="217.8" width="1" height="1"/><rect x="655.0" y="724.7" width="1" height="1"/><rect x="655.0" y="652.3" width="1" height="1"/><rect x="655.0" y="579.9" width="1" height="1"/><rect x="655.0" y="507.5" width="1" height="1"/><rect x="655.0" y="435.1" width="1" height="1"/><rect x="655.0" y="362.6" width="1" height="1"/><rect x="655.0" y="290.2" width="1" height="1"/><rect x="655.0" y="217.8" width="1" height="1"/><rect x="727.5" y="724.7" width="1" height="1"/><rect x="727.5" y="652.3" width="1" height="1"/><rect x="727.5" y="579.9" width="1" height="1"/><rect x="727.5" y="507.5" width="1" height="1"/><rect x="727.5" y="435.1" width="1" height="1"/><rect x="727.5" y="362.6" width="1" height="1"/><rect x="727.5" y="290.2" width="1" height="1"/><rect x="727.5" y="217.8" width="1" height="1"/><rect x="799.9" y="724.7" width="1" height="1"/><rect x="799.9" y="652.3" width="1" height="1"/><rect x="799.9" y="579.9" width="1" height="1"/><rect x="799.9" y="507.5" width="1" height="1"/><rect x="799.9" y="435.1" width="1" height="1"/><rect x="799.9" y="362.6" width="1" height="1"/><rect x="799.9" y="290.2" width="1" height="1"/><rect x="799.9" y="217.8" width="1" height="1"/><rect x="872.4" y="724.7" width="1" height="1"/><rect x="872.4" y="652.3" width="1" height="1"/><rect x="872.4" y="579.9" width="1" height="1"/><rect x="872.4" y="507.5" width="1" height="1"/><rect x="872.4" y="435.1" width="1" height="1"/><rect x="872.4" y="362.6" width="1" height="1"/><rect x="872.4" y="290.2" width="1" height="1"/><rect x="872.4" y="217.8" width="1" height="1"/><rect x="944.9" y="724.7" width="1" height="1"/><rect x="944.9" y="652.3" width="1" height="1"/><rect x="944.9" y="579.9" width="1" height="1"/><rect x="944.9" y="507.5" width="1" height="1"/><rect x="944.9" y="435.1" width="1" height="1"/><rect x="944.9" y="362.6" width="1" height="1"/><rect x="944.9" y="290.2" width="1" height="1"/><rect x="944.9" y="217.8" width="1" height="1"/><rect x="1017.3" y="724.7" width="1" height="1"/><rect x="1017.3" y="652.3" width="1" height="1"/><rect x="1017.3" y="579.9" width="1" height="1"/><rect x="1017.3" y="507.5" width="1" height="1"/><rect x="1017.3" y="435.1" width="1" height="1"/><rect x="1017.3" y="362.6" width="1" height="1"/><rect x="1017.3" y="290.2" width="1" height="1"/><rect x="1017.3" y="217.8" width="1" height="1"/><rect x="1089.8" y="724.7" width="1" height="1"/><rect x="1089.8" y="652.3" width="1" height="1"/><rect x="1089.8" y="579.9" width="1" height="1"/><rect x="1089.8" y="507.5" width="1" height="1"/><rect x="1089.8" y="435.1" width="1" height="1"/><rect x="1089.8" y="362.6" width="1" height="1"/><rect x="1089.8" y="290.2" width="1" height="1"/><rect x="1089.8" y="217.8" width="1" height="1"/></g>
<path d="M372.9 175.4H474.6V182.5H461.9V185.5H474.6V296.1H461.9V299.2H474.6V306.6H372.9Q371.4 306.6 371.4 305.1V176.9Q371.4 175.4 372.9 175.4Z" fill="none" stroke="#d6d6d6" stroke-width="0.82" />
<path d="M605.0 175.4H503.2V182.5H515.9V185.5H503.2V296.1H515.9V299.2H503.2V306.6H605.0Q606.5 306.6 606.5 305.1V176.9Q606.5 175.4 605.0 175.4Z" fill="none" stroke="#d6d6d6" stroke-width="0.82" />
<rect x="425.4" y="182.5" width="15.4" height="3.0" rx="0.4" fill="none" stroke="#d6d6d6" stroke-width="0.82"/>
<rect x="425.4" y="296.1" width="15.4" height="3.1" rx="0.4" fill="none" stroke="#d6d6d6" stroke-width="0.82"/>
<rect x="537.2" y="182.5" width="15.2" height="3.0" rx="0.4" fill="none" stroke="#d6d6d6" stroke-width="0.82"/>
<rect x="537.2" y="296.1" width="15.2" height="3.1" rx="0.4" fill="none" stroke="#d6d6d6" stroke-width="0.82"/>
<path d="M479.0 374.2V357.9A9.6 9.6 0 0 1 498.2 357.9V374.2L514.6 387.5L516.7 385.3L527.9 394.2L525.8 396.6L546.5 413.6L533.3 490.2L509.9 490.2L509.9 493.1L531.8 493.1L532.2 498.6Q532.0 500.2 530.4 500.2H446.8Q445.2 500.2 445.0 498.6L445.4 493.1L467.3 493.1L467.3 490.2L443.9 490.2L430.7 413.6L451.4 396.6L449.3 394.2L460.5 385.3L462.6 387.5L479.0 374.2" fill="none" stroke="#d6d6d6" stroke-width="0.82" stroke-linejoin="round"/>
<circle cx="488.6" cy="358" r="2.3" fill="none" stroke="#d6d6d6" stroke-width="0.9"/>
<circle cx="488.6" cy="425.1" r="20.6" fill="none" stroke="#d6d6d6" stroke-width="0.82"/>
<path d="M487.3 411.0L483.1 410.2L480.2 411.6L479.0 414.8L477.8 419.0L477.2 423.1L478.1 426.7L480.2 430.2L483.1 432.6L486.4 434.4L488.2 435.8M487.3 411.0L491.4 411.6L490.0 413.5L488.5 414.2L488.2 416.9L490.9 419.0L493.8 422.5L496.2 426.7L499.7 432.0L503.9 437.9M503.9 437.9L502.1 440.9L498.0 443.5L494.4 441.8L491.4 439.1L490.6 436.1L493.8 434.2L497.4 435.4L500.9 436.6L503.9 437.9M470.1 427.4L486.7 435.0M470.1 427.4L468.6 429.0L495.0 444.3L492.6 445.3M480.8 437.0L488.5 440.9M486.4 434.4L489.1 437.9L491.4 439.1" fill="none" stroke="#d6d6d6" stroke-width="0.8" stroke-linejoin="round"/>
<path d="M488.6 333V517" fill="none" stroke="#a40000" stroke-width="0.85" stroke-dasharray="7 1.5 1.2 1.5"/>
<path d="M459.1 425.1H518.1M473.8 358H503.6" fill="none" stroke="#a40000" stroke-width="0.85" stroke-dasharray="7 1.5 1.2 1.5"/>
<rect x="394.1" y="558.2" width="80.8" height="7.3" rx="0.3" fill="none" stroke="#d6d6d6" stroke-width="0.82"/>
<rect x="394.1" y="711.1" width="80.8" height="7.5" rx="0.3" fill="none" stroke="#d6d6d6" stroke-width="0.82"/>
<rect x="503.3" y="558.2" width="80.3" height="7.3" rx="0.3" fill="none" stroke="#d6d6d6" stroke-width="0.82"/>
<rect x="503.3" y="711.1" width="80.3" height="7.5" rx="0.3" fill="none" stroke="#d6d6d6" stroke-width="0.82"/>
<rect x="379.3" y="575.3" width="8.5" height="125.3" rx="0.3" fill="none" stroke="#d6d6d6" stroke-width="0.82"/>
<rect x="590.2" y="575.3" width="7.7" height="125.3" rx="0.3" fill="none" stroke="#d6d6d6" stroke-width="0.82"/>
<path d="M395.6 572.5H474.9V580.3H452.1V583.2H474.9V693.5H452.1V696.5H474.9V703.3H395.6Q394.1 703.3 394.1 701.8V574.0Q394.1 572.5 395.6 572.5Z" fill="none" stroke="#d6d6d6" stroke-width="0.82" />
<path d="M582.1 572.5H503.3V580.3H525.7V583.2H503.3V693.5H525.7V696.5H503.3V703.3H582.1Q583.6 703.3 583.6 701.8V574.0Q583.6 572.5 582.1 572.5Z" fill="none" stroke="#d6d6d6" stroke-width="0.82" />
<path d="M863.4 556.6V544.3A9.65 9.65 0 0 1 882.7 544.3V556.6" fill="none" stroke="#d6d6d6" stroke-width="0.82" />
<circle cx="873.07" cy="544.3" r="2.5" fill="none" stroke="#d6d6d6" stroke-width="0.9"/>
<path d="M873.1 551.2L792.3 614.4L794.6 616.9L873.1 554.4L951.5 616.9L953.8 614.4Z" fill="none" stroke="#d6d6d6" stroke-width="0.9" stroke-linejoin="miter"/>
<path d="M815.4 599.6L826.3 669.1M930.7 599.6L919.8 669.1" fill="none" stroke="#d6d6d6" stroke-width="0.82" />
<circle cx="873.07" cy="611" r="20.9" fill="none" stroke="#d6d6d6" stroke-width="0.82"/>
<path d="M871.8 596.8L867.6 596.0L864.6 597.4L863.4 600.6L862.2 604.8L861.6 609.0L862.5 612.6L864.6 616.2L867.6 618.6L870.9 620.4L872.7 621.9M871.8 596.8L875.9 597.4L874.4 599.3L873.0 600.1L872.7 602.7L875.3 604.8L878.3 608.4L880.7 612.6L884.3 618.0L888.5 624.0M888.5 624.0L886.7 627.0L882.5 629.7L878.9 627.9L875.9 625.2L875.0 622.2L878.3 620.3L881.9 621.5L885.5 622.7L888.5 624.0M854.4 613.3L871.2 621.0M854.4 613.3L852.9 615.0L879.5 630.4L877.1 631.5M865.2 623.1L873.0 627.0M870.9 620.4L873.5 624.0L875.9 625.2" fill="none" stroke="#d6d6d6" stroke-width="0.8" stroke-linejoin="round"/>
<rect x="793.3" y="669.1" width="159.6" height="10.0" rx="0" fill="none" stroke="#d6d6d6" stroke-width="0.82"/>
<path d="M793.3 676.3H952.9" fill="none" stroke="#d6d6d6" stroke-width="0.82" />
<path d="M828.3 679.1L829.4 685Q829.8 686.7 831.6 686.7H914.6Q916.3 686.7 916.7 685L917.8 679.1" fill="none" stroke="#d6d6d6" stroke-width="0.82" />
<path d="M873.07 525V697.5" fill="none" stroke="#a40000" stroke-width="0.85" stroke-dasharray="7 1.5 1.2 1.5"/>
<path d="M874 534.6H976.6M974.8 534.6V686.3M916.5 686.3H976.6M793.3 680V713M952.9 680V713M793.3 711.1H952.9" fill="none" stroke="#007c7c" stroke-width="0.9" />
<path d="M974.8 534.6l-1.2 4.6h2.4zM974.8 686.3l-1.2 -4.6h2.4zM793.3 711.1l4.6 -1.2v2.4zM952.9 711.1l-4.6 -1.2v2.4z" fill="#007c7c"/>
<text x="873" y="709.6" font-family="Liberation Sans" font-size="5.4" fill="#007c7c" text-anchor="middle">220</text>
<text transform="translate(973.4,610.5) rotate(-90)" font-family="Liberation Sans" font-size="5.4" fill="#007c7c" text-anchor="middle">209</text>
<path d="M760.0 321.7L815.4 289.7M824.0 284.5L856.7 266.3L855.7 267.0L895.5 252.7M760.0 321.7L761.1 323.7L816.6 303.1M760.0 321.7L816.1 301.5M780.6 316.7L789.8 381.2M831.1 291.9L901.2 253.4M831.1 294.7L902.9 255.2M816.9 302.5L873.0 386.9L966.4 333.4L911.2 251.3M815.7 303.5L871.4 386.3M842.5 328.8L844.6 327.7L851.7 338.4L849.6 339.5ZM922.5 281.9L924.7 280.9L932.1 291.9L929.9 293.3ZM795.2 307.2L802.9 304.7L803.5 305.8L795.8 308.4ZM875.3 259.9L883.0 257.4L883.6 258.6L875.9 261.0ZM862.4 371.9L855.3 418.9M863.8 372.8L856.7 419.5M938.2 349.9L934.6 374.1M939.9 349.5L936.2 373.4M914.7 363.4L933.9 374.1L936.2 373.4M760.7 366.3L873.5 430.3L965.2 378.3M760.7 372.7L873.5 436.7L965.2 384.7M760.7 374.9L873.5 438.9L965.2 386.9M760.7 366.3L760.7 374.9M873.5 430.3L873.5 439.2M965.2 378.3L965.2 386.9M785.6 353.4L760.7 366.3M786.3 359.9L768.5 369.4L873.5 432.6L956.7 381.9L938.2 371.2M762.5 367.4L786.7 354.6M965.2 378.3L938.2 363.4M963.1 379.8L938.9 365.3M875.1 431.1L875.1 437.3M963.4 379.3L963.4 385.3M816.1 399.0L816.1 407.2M817.3 399.7L817.3 407.8" fill="none" stroke="#c4c4c4" stroke-width="0.75" stroke-linejoin="round"/>
<path d="M815.4 301.5L815.4 289.3C815.7 282.6 829.7 283.3 830.5 295.0L830.5 307.2L828.0 308.9L821.1 300.1L815.4 301.5M828.0 308.9L828.0 296.1C827.5 288.3 819.7 284.7 816.6 286.5M895.5 254.6L895.5 242.8C895.8 236.4 909.7 236.7 910.9 248.9L910.9 261.3L908.6 262.6L902.1 253.7L895.5 254.6M908.6 262.6L908.6 249.9C908.0 242.1 900.1 238.7 896.9 240.1" fill="none" stroke="#c4c4c4" stroke-width="0.8" stroke-linejoin="round"/>
<ellipse cx="822.1" cy="294.7" rx="1.5" ry="2.2" transform="rotate(-20 822.1 294.7)" fill="none" stroke="#c4c4c4" stroke-width="0.8"/>
<ellipse cx="902.1" cy="248.5" rx="1.5" ry="2.2" transform="rotate(-20 902.1 248.5)" fill="none" stroke="#c4c4c4" stroke-width="0.8"/>
<g transform="matrix(0.731,0.422,0,0.844,821.8,348.9)"><circle cx="0" cy="0" r="20.6" fill="none" stroke="#c4c4c4" stroke-width="0.8" vector-effect="non-scaling-stroke"/><circle cx="2.6" cy="0.4" r="20.6" fill="none" stroke="#c4c4c4" stroke-width="0.6" vector-effect="non-scaling-stroke" stroke-dasharray="40 36 200"/></g>
<g transform="matrix(0.731,0.422,0,0.844,821.8,348.9)"><path vector-effect="non-scaling-stroke" d="M-1.3 -14.1L-5.5 -14.9L-8.4 -13.5L-9.6 -10.2L-10.8 -6.1L-11.4 -2.0L-10.5 1.6L-8.4 5.2L-5.5 7.5L-2.2 9.3L-0.4 10.8M-1.3 -14.1L2.8 -13.5L1.4 -11.6L-0.1 -10.8L-0.4 -8.2L2.3 -6.1L5.2 -2.5L7.6 1.6L11.1 6.9L15.3 12.9M15.3 12.9L13.5 15.8L9.4 18.5L5.8 16.7L2.8 14.0L2.0 11.1L5.2 9.2L8.8 10.4L12.3 11.6L15.3 12.9M-18.5 2.3L-1.9 9.9M-18.5 2.3L-20.0 4.0L6.4 19.3L4.0 20.3M-7.8 12.0L-0.1 15.8M-2.2 9.3L0.5 12.9L2.8 14.0" fill="none" stroke="#d6d6d6" stroke-width="0.7" stroke-linejoin="round"/></g>
<g transform="matrix(0.731,0.422,0,0.844,823.4,349.3)"><path vector-effect="non-scaling-stroke" d="M-1.3 -14.1L-5.5 -14.9L-8.4 -13.5L-9.6 -10.2L-10.8 -6.1L-11.4 -2.0L-10.5 1.6L-8.4 5.2L-5.5 7.5L-2.2 9.3L-0.4 10.8M-1.3 -14.1L2.8 -13.5L1.4 -11.6L-0.1 -10.8L-0.4 -8.2L2.3 -6.1L5.2 -2.5L7.6 1.6L11.1 6.9L15.3 12.9M15.3 12.9L13.5 15.8L9.4 18.5L5.8 16.7L2.8 14.0L2.0 11.1L5.2 9.2L8.8 10.4L12.3 11.6L15.3 12.9M-18.5 2.3L-1.9 9.9M-18.5 2.3L-20.0 4.0L6.4 19.3L4.0 20.3M-7.8 12.0L-0.1 15.8M-2.2 9.3L0.5 12.9L2.8 14.0" fill="none" stroke="#d6d6d6" stroke-width="0.5" opacity="0.7" stroke-linejoin="round"/></g>
<path d="M394.3 155V732M95 492.5H1139" fill="none" stroke="#8f6c0e" stroke-width="1.1" stroke-dasharray="4.7 1.5"/>
<path d="M127.6 580.4H168.6M148.1 560V601" fill="none" stroke="#a80000" stroke-width="1.1" />
<circle cx="191.6" cy="486.2" r="5.3" fill="none" stroke="#a80000" stroke-width="1"/>
<path d="M186.3 486.2H196.9M191.6 480.9V491.5" fill="none" stroke="#a80000" stroke-width="1" />
</svg><!--CANVASE--></div>
<div id="vscroll"><div style="left:4px;top:164px;width:8px;height:246px;border-radius:4px;background:#7f7f7f"></div></div>
<div id="hscroll"><div style="left:111px;top:4px;width:718px;height:8px;border-radius:4px;background:#7f7f7f"></div>
<div style="left:995px;top:0;width:88px;height:17px;background:#ebebeb"></div>
<span style="right:1px;top:0px;font-size:13px;line-height:17px;color:#111;white-space:nowrap;letter-spacing:0px">100 &lt; 1000</span></div>

<div style="left:72px;top:747px;width:1083px;height:51px;background:#ececec"></div>
<div style="left:72px;top:747px;width:1083px;height:2px;background:#c6c6c6"></div>
<div style="left:72px;top:749px;width:1083px;height:22px;background:#fff;border-bottom:1px solid #c4c4c4"></div>
<span style="left:77px;top:750.7px;font-size:13.4px;line-height:16px;color:#0000c8;white-space:nowrap"><i style="position:static;font-style:italic">Comando:</i> vt</span>
<div style="left:1138px;top:749px;width:16px;height:21px;background:#fafafa;border-left:1px solid #eee"></div>
<div style="left:1142px;top:750px;width:8px;height:17px;border-radius:4px;background:#808080"></div>
<span style="left:73px;top:778px;font-size:13.25px;line-height:16px;color:#111;white-space:nowrap;letter-spacing:0px">Primer punto de esquina:</span>
<div style="left:227px;top:775px;width:901px;height:19px;background:#fff"></div>
<div style="left:1127px;top:772px;width:26px;height:25px;background:linear-gradient(#e9e9e9,#f8f8f8);border:1px solid #b4b4b4"></div>
<div style="left:1133px;top:780px;width:14px;height:10px;background:#f4f4f4;border:1px solid #555;border-top:3px solid #111"></div>

<div id="rightpanel"><!--RPS--><svg style="left:0;top:0" width="299.5" height="690" viewBox="1155 108 299.5 690">
<defs>
<linearGradient id="gT" x1="0" y1="0" x2="0" y2="1"><stop offset="0" stop-color="#ededed"/><stop offset="1" stop-color="#dcdcdc"/></linearGradient>
<linearGradient id="gPB" x1="0" y1="0" x2="0" y2="1"><stop offset="0" stop-color="#e2e2e2"/><stop offset="0.5" stop-color="#f2f2f2"/><stop offset="1" stop-color="#f7f7f7"/></linearGradient>
<g id="eye"><path d="M-7.5 0.3 C-5.6 -3.6 -2.8 -5.7 0.2 -5.7 C3.6 -5.7 6 -3.2 7.5 0.8 C5.4 3.8 3 5.6 0 5.6 C-3.2 5.6 -5.6 3.6 -7.5 0.3 Z" fill="currentColor"/><path d="M-5 0 C-3.6 -2.4 -1.8 -3 0.2 -3 C2.4 -3 3.8 -2.2 5 0.3 C3.6 2.6 2 3.3 0 3.3 C-2 3.3 -3.8 2.4 -5 0 Z" style="fill:var(--w,#fff)"/><circle cx="0.15" cy="-0.5" r="2.55" fill="currentColor"/><circle cx="-1" cy="-1.1" r="0.7" style="fill:var(--w,#fff)" opacity="0.55"/><path d="M-5.6 3.4 L-6.2 4.6 M-3.4 4.8 L-3.8 5.9 M3.4 4.8 L3.9 5.8 M5.6 3 L6.4 3.8" stroke="currentColor" stroke-width="0.8"/></g>
<g id="pen"><g transform="rotate(42)"><rect x="-1.7" y="-8.6" width="3.4" height="12.6" fill="#e8b04a" stroke="#b07a2a" stroke-width="0.5"/><rect x="-0.5" y="-8.6" width="0.9" height="12.6" fill="#f6d58a"/><path d="M-1.7 -8.6 A1.7 1.7 0 0 1 1.7 -8.6 L1.7 -6.2 L-1.7 -6.2 Z" fill="#e8302a" stroke="#a8221c" stroke-width="0.4"/><path d="M-1.7 4 L0 8.4 L1.7 4 Z" fill="#e9c98f" stroke="#a87b3a" stroke-width="0.4"/><path d="M-0.5 7 L0 8.4 L0.5 7Z" fill="#444"/></g></g>
<g id="lock"><path d="M-3.2 -1 V-4 A3.2 3.2 0 0 1 3.2 -4 V-1" fill="none" stroke="currentColor" stroke-width="1.5"/><rect x="-4.8" y="-1" width="9.6" height="8" rx="0.8" fill="currentColor"/></g>
<g id="wbtn"><circle r="7" fill="#676767"/></g>
</defs>
<rect x="1155" y="108" width="299" height="690" fill="#fff"/>
<rect x="1155" y="108" width="299" height="23" fill="url(#gT)"/><circle cx="1164" cy="118.2" r="7" fill="#686868"/><path d="M1161 115.2L1167 121.2M1167 115.2L1161 121.2" stroke="#f4f4f4" stroke-width="2" stroke-linecap="round"/><circle cx="1182" cy="118.2" r="7" fill="#686868"/><rect x="1180.6" y="114.6" width="5" height="4.2" rx="0.6" fill="none" stroke="#f4f4f4" stroke-width="1"/><rect x="1178.4" y="117" width="5" height="4.2" rx="0.6" fill="#686868" stroke="#f4f4f4" stroke-width="1"/><text x="1322" y="122.6" font-family="Liberation Sans" font-size="11.7" fill="#222" text-anchor="middle" letter-spacing="0.05">Lista de bloques</text>
<rect x="1155.5" y="131.2" width="36.1" height="24.0" fill="url(#gPB)" stroke="#b3b3b3" stroke-width="1"/>
<rect x="1193.1" y="131.2" width="36.1" height="24.0" fill="url(#gPB)" stroke="#b3b3b3" stroke-width="1"/>
<rect x="1230.7" y="131.2" width="36.1" height="24.0" fill="url(#gPB)" stroke="#b3b3b3" stroke-width="1"/>
<rect x="1268.3" y="131.2" width="36.1" height="24.0" fill="url(#gPB)" stroke="#b3b3b3" stroke-width="1"/>
<rect x="1305.9" y="131.2" width="36.1" height="24.0" fill="url(#gPB)" stroke="#b3b3b3" stroke-width="1"/>
<rect x="1343.5" y="131.2" width="36.1" height="24.0" fill="url(#gPB)" stroke="#b3b3b3" stroke-width="1"/>
<rect x="1381.1" y="131.2" width="36.1" height="24.0" fill="url(#gPB)" stroke="#b3b3b3" stroke-width="1"/>
<rect x="1418.7" y="131.2" width="36.1" height="24.0" fill="url(#gPB)" stroke="#b3b3b3" stroke-width="1"/>
<use href="#eye" x="1173.5" y="142.8" color="#000" opacity="1" style="--w:#fff"/>
<use href="#eye" x="1211.1" y="142.8" color="#9a9a9a" opacity="1" style="--w:#ececec"/>
<path d="M1242.8 143.0H1254.8M1248.8 137.0V149.0" stroke="#f00a0a" stroke-width="3"/><path d="M1242.8 144.6H1247.2M1250.3 144.5V149.0" stroke="#9a0000" stroke-width="0.5" opacity=".5"/>
<path d="M1280.3 143.0H1292.3" stroke="#f00a0a" stroke-width="3"/>
<text x="1324.5" y="147" font-family="Liberation Sans" font-size="12.5" fill="#111" text-anchor="middle" letter-spacing="1.4">ab</text><path d="M1324.0 136V150" stroke="#111" stroke-width="0.8"/>
<g transform="translate(1361.5,142.6) scale(1.05)" opacity="1"><use href="#pen"/></g>
<rect x="1394.1" y="136" width="10" height="13" fill="#f2f5fb" stroke="#c8d0e0" stroke-width="0.6"/><path d="M1395.7 137.4 C1399.9 137.4 1399.9 139 1399.9 142 V145" fill="none" stroke="#1a36e8" stroke-width="2.2"/><path d="M1396.3 144.6 H1403.5 L1399.9 149.4 Z" fill="#1a36e8"/>
<rect x="1431.0" y="137" width="11.4" height="11.4" fill="#f08a6a" stroke="#d8502e" stroke-width="1.2"/><path d="M1434.2 140.2l5 5m0-5l-5 5" stroke="#fff" stroke-width="1.8"/>
<rect x="1155.5" y="156.5" width="299" height="172" fill="#fff" stroke="#c9c9c9" stroke-width="1"/>
<rect x="1156" y="197.4" width="298" height="19.6" fill="#d4d4d4"/>
<use href="#eye" x="1169.0" y="167.0" color="#000" opacity="1" style="--w:#fff"/>
<text x="1205.2" y="171.1" font-family="Liberation Sans" font-size="13.5" fill="#111">Model (*Model_Space)</text>
<use href="#eye" x="1169.0" y="187.0" color="#000" opacity="1" style="--w:#fff"/>
<text x="1205.2" y="191.1" font-family="Liberation Sans" font-size="13.5" fill="#111">Layout1 (*Paper_Space)</text>
<use href="#eye" x="1169.0" y="207.0" color="#2c3c52" opacity="1" style="--w:#a9adb4"/>
<text x="1205.2" y="211.1" font-family="Liberation Sans" font-size="13.5" fill="#111">Borde</text>
<g transform="translate(1191.4,167.2) scale(0.95)" opacity="1"><use href="#pen"/></g>
<rect x="1155" y="329.6" width="299" height="22.6" fill="url(#gT)"/><circle cx="1164" cy="339.6" r="7" fill="#686868"/><path d="M1161 336.6L1167 342.6M1167 336.6L1161 342.6" stroke="#f4f4f4" stroke-width="2" stroke-linecap="round"/><circle cx="1182" cy="339.6" r="7" fill="#686868"/><rect x="1180.6" y="336" width="5" height="4.2" rx="0.6" fill="none" stroke="#f4f4f4" stroke-width="1"/><rect x="1178.4" y="338.4" width="5" height="4.2" rx="0.6" fill="#686868" stroke="#f4f4f4" stroke-width="1"/><text x="1322" y="344" font-family="Liberation Sans" font-size="11.7" fill="#222" text-anchor="middle" letter-spacing="0.05">Lista de capas</text>
<rect x="1155.5" y="352.6" width="58.6" height="25.0" fill="url(#gPB)" stroke="#b3b3b3" stroke-width="1"/>
<rect x="1215.6" y="352.6" width="58.6" height="25.0" fill="url(#gPB)" stroke="#b3b3b3" stroke-width="1"/>
<rect x="1275.7" y="352.6" width="58.6" height="25.0" fill="url(#gPB)" stroke="#b3b3b3" stroke-width="1"/>
<rect x="1335.8" y="352.6" width="58.6" height="25.0" fill="url(#gPB)" stroke="#b3b3b3" stroke-width="1"/>
<rect x="1395.9" y="352.6" width="58.6" height="25.0" fill="url(#gPB)" stroke="#b3b3b3" stroke-width="1"/>
<use href="#eye" x="1184.8" y="364.8" color="#000" opacity="1" style="--w:#fff"/>
<use href="#eye" x="1244.9" y="364.8" color="#9a9a9a" opacity="1" style="--w:#ececec"/>
<path d="M1299.0 365.0H1311.0M1305.0 359.0V371.0" stroke="#f00a0a" stroke-width="3"/><path d="M1299.0 366.6H1303.5M1306.6 366.5V371.0" stroke="#9a0000" stroke-width="0.5" opacity=".5"/>
<path d="M1359.1 365.0H1371.1" stroke="#f00a0a" stroke-width="3"/>
<g transform="translate(1425.2,364.6) scale(1.05)" opacity="1"><use href="#pen"/></g>
<rect x="1155.5" y="378.5" width="299" height="420" fill="#fff" stroke="#c9c9c9" stroke-width="1"/>
<rect x="1156" y="479.4" width="298" height="19.6" fill="#0a44d8"/>
<rect x="1161.4" y="384.7" width="15.4" height="9" fill="#000" stroke="#111" stroke-width="1"/>
<text x="1183" y="393.3" font-family="Liberation Sans" font-size="13.5" fill="#111">0</text>
<use href="#eye" x="1423.0" y="389.3" color="#000" opacity="1" style="--w:#fff"/>
<use href="#lock" x="1444.8" y="388.9" color="#b9b9b9"/>
<rect x="1161.4" y="404.7" width="15.4" height="9" fill="#008080" stroke="#111" stroke-width="1"/>
<text x="1183" y="413.3" font-family="Liberation Sans" font-size="13.5" fill="#111">Acotaciones</text>
<use href="#eye" x="1423.0" y="409.3" color="#000" opacity="1" style="--w:#fff"/>
<use href="#lock" x="1444.8" y="408.9" color="#b9b9b9"/>
<rect x="1161.4" y="424.7" width="15.4" height="9" fill="#000" stroke="#111" stroke-width="1"/>
<text x="1183" y="433.3" font-family="Liberation Sans" font-size="13.5" fill="#111">Borde</text>
<use href="#eye" x="1423.0" y="429.3" color="#000" opacity="1" style="--w:#fff"/>
<use href="#lock" x="1444.8" y="428.9" color="#b9b9b9"/>
<rect x="1161.4" y="444.7" width="15.4" height="9" fill="#f00" stroke="#111" stroke-width="1"/>
<text x="1183" y="453.3" font-family="Liberation Sans" font-size="13.5" fill="#111">Centro</text>
<use href="#eye" x="1423.0" y="449.3" color="#000" opacity="1" style="--w:#fff"/>
<use href="#lock" x="1444.8" y="448.9" color="#b9b9b9"/>
<rect x="1161.4" y="464.7" width="15.4" height="9" fill="#fff" stroke="#111" stroke-width="1"/>
<text x="1183" y="473.3" font-family="Liberation Sans" font-size="13.5" fill="#111">Defpoints</text>
<use href="#eye" x="1423.0" y="469.3" color="#000" opacity="1" style="--w:#fff"/>
<use href="#lock" x="1444.8" y="468.9" color="#b9b9b9"/>
<rect x="1161.4" y="484.7" width="15.4" height="9" fill="#e040fb" stroke="#111" stroke-width="1"/>
<text x="1183" y="493.3" font-family="Liberation Sans" font-size="13.5" fill="#fff">Ventanas</text>
<use href="#eye" x="1423.0" y="489.3" color="#16256e" opacity="1" style="--w:#2e55cc"/>
<use href="#lock" x="1444.8" y="488.9" color="#aebbe0"/>
<rect x="1161.4" y="504.7" width="15.4" height="9" fill="#000" stroke="#111" stroke-width="1"/>
<text x="1183" y="513.3" font-family="Liberation Sans" font-size="13.5" fill="#111">Visible</text>
<use href="#eye" x="1423.0" y="509.3" color="#000" opacity="1" style="--w:#fff"/>
<use href="#lock" x="1444.8" y="508.9" color="#b9b9b9"/>
<g transform="translate(1401.0,488.6) scale(0.9)" opacity="0.85"><use href="#pen"/></g>
</svg><!--RPE--></div>
<div id="righttb"><!--RTS--><svg style="left:0;top:0" width="45.5" height="690" viewBox="1454.5 108 45.5 690">
<g fill="#a2a2a2"><rect x="1462" y="116" width="2" height="2"/><rect x="1468" y="116" width="2" height="2"/><rect x="1474" y="116" width="2" height="2"/><rect x="1480" y="116" width="2" height="2"/><rect x="1486" y="116" width="2" height="2"/></g>
<rect x="1456.2" y="121" width="48" height="41.6" rx="5" fill="#b5b5b5"/>
<rect x="1456.2" y="167.2" width="48" height="42.2" rx="5" fill="#b5b5b5"/>
<rect x="1456.2" y="418.6" width="48" height="42.2" rx="5" fill="#b5b5b5"/>
<rect x="1463.4" y="127.2" width="27.4" height="27.2" fill="#fff" stroke="#444" stroke-width="0.8"/><rect x="1463.4" y="127.2" width="27.4" height="4.4" fill="#000"/><rect x="1464.2" y="127.8" width="3" height="3" fill="#fff"/>
<rect x="1463.4" y="174.2" width="27.4" height="27.2" fill="#fff" stroke="#444" stroke-width="0.8"/><rect x="1463.4" y="174.2" width="27.4" height="4.4" fill="#000"/><rect x="1464.2" y="174.8" width="3" height="3" fill="#fff"/>
<rect x="1463.4" y="221.2" width="27.4" height="27.2" fill="#fff" stroke="#444" stroke-width="0.8"/><rect x="1463.4" y="221.2" width="27.4" height="4.4" fill="#000"/><rect x="1464.2" y="221.8" width="3" height="3" fill="#fff"/>
<rect x="1463.4" y="277" width="27.4" height="27.2" fill="#fff" stroke="#444" stroke-width="0.8"/><rect x="1463.4" y="277" width="27.4" height="4.4" fill="#000"/><rect x="1464.2" y="277.6" width="3" height="3" fill="#fff"/>
<rect x="1463.4" y="323.4" width="27.4" height="27.2" fill="#fff" stroke="#444" stroke-width="0.8"/><rect x="1463.4" y="323.4" width="27.4" height="4.4" fill="#000"/><rect x="1464.2" y="324" width="3" height="3" fill="#fff"/>
<rect x="1463.4" y="369.4" width="27.4" height="27.2" fill="#fff" stroke="#444" stroke-width="0.8"/><rect x="1463.4" y="369.4" width="27.4" height="4.4" fill="#000"/><rect x="1464.2" y="370" width="3" height="3" fill="#fff"/>
<rect x="1463.4" y="425.4" width="27.4" height="27.2" fill="#fff" stroke="#444" stroke-width="0.8"/><rect x="1463.4" y="425.4" width="27.4" height="4.4" fill="#000"/><rect x="1464.2" y="426" width="3" height="3" fill="#fff"/>
<rect x="1463.4" y="472" width="27.4" height="27.2" fill="#fff" stroke="#444" stroke-width="0.8"/><rect x="1463.4" y="472" width="27.4" height="4.4" fill="#000"/><rect x="1464.2" y="472.6" width="3" height="3" fill="#fff"/>
<path d="M1458.5 262.5H1500M1458.5 410.5H1500" stroke="#666" stroke-width="1" stroke-dasharray="1 2"/>
<g transform="translate(1477,144.8)"><path d="M-6.4 -3 L1.6 -6.4 V3.6 L-6.4 7 Z" fill="#bdbdbd" stroke="#444" stroke-width="0.7"/><path d="M-4 -4 L4 -7.4 V2.6 L-4 6 Z" fill="#d8d8d8" stroke="#444" stroke-width="0.7"/><path d="M-1.6 -4.6 L6.4 -8 V2 L-1.6 5.4 Z" fill="#f4f4f4" stroke="#444" stroke-width="0.7"/><path d="M0 3 L4.6 -4 V1 Z" fill="none" stroke="#e33" stroke-width="0.9"/></g>
<rect x="1470.2" y="184.4" width="9.6" height="7.6" fill="#f3e3a0" stroke="#555" stroke-width="0.8"/><circle cx="1479" cy="191.8" r="4.4" fill="#f3e3a0" fill-opacity="0.8" stroke="#555" stroke-width="0.8"/>
<rect x="1468.6" y="231.4" width="17" height="10.6" rx="2" fill="#f6f6f4" stroke="#b7c7e4" stroke-width="1"/>
<rect x="1466.2" y="285.2" width="3.4" height="2.6" fill="#000"/><rect x="1472.6" y="285.2" width="14.4" height="2.8" fill="#fff" stroke="#555" stroke-width="0.6"/>
<rect x="1466.2" y="291" width="3.4" height="2.6" fill="#000"/><rect x="1472.6" y="291" width="14.4" height="2.8" fill="#fff" stroke="#555" stroke-width="0.6"/>
<rect x="1466.2" y="296.8" width="3.4" height="2.6" fill="#000"/><rect x="1472.6" y="296.8" width="14.4" height="2.8" fill="#fff" stroke="#555" stroke-width="0.6"/>
<path d="M1469.6 333.2 C1472 335 1482 335 1484.4 333.2 L1478.6 339.8 V346 H1475.4 V339.8 Z" fill="#c9c9c9" stroke="#555" stroke-width="0.8"/><ellipse cx="1477" cy="333" rx="7.4" ry="1.6" fill="#e6e6e6" stroke="#555" stroke-width="0.7"/>
<path d="M1469 384.8H1486" stroke="#f66" stroke-width="0.6" stroke-dasharray="2 1"/><path d="M1469.4 379 L1473.6 381.6 V388 L1469.4 390.8 Z" fill="#eee" stroke="#444" stroke-width="0.7"/><rect x="1473.6" y="382" width="9" height="5.6" rx="1" fill="#888" stroke="#555" stroke-width="0.5"/>
<g stroke="#555" stroke-width="0.8"><path d="M1466 433.8H1480"/><path d="M1466 437.1H1478"/><path d="M1466 440.4H1481"/><path d="M1466 443.7H1483"/></g><path d="M1463.4 448H1490.8" stroke="#444" stroke-width="0.7"/><path d="M1466 450.4H1468M1472 450.4H1489" stroke="#333" stroke-width="0.9"/>
<rect x="1471" y="481" width="12.4" height="13.6" rx="0.8" fill="#c68a2a" stroke="#a66d18" stroke-width="0.5"/><rect x="1472.8" y="483" width="8.8" height="10.4" fill="#f4f4f4"/><path d="M1478.6 493.4 h3 v-3z" fill="#aaa"/><rect x="1474.2" y="480" width="6" height="2.6" rx="0.8" fill="#8e8e84"/>
</svg><!--RTE--></div>
<div id="status">
<span class="st" style="left:3px;top:8px">339.5692,121.0692</span>
<span class="st" style="left:2px;top:28px">@279.5692,-8.9308</span>
<div style="left:253px;top:5px;width:1px;height:37px;background:#8a8a8a"></div>
<span class="st" style="left:256px;top:8px">360.5066&lt;20°</span>
<span class="st" style="left:256px;top:28px">@279.7118&lt;358°</span>
<div class="dot" style="left:506px;top:21px"></div>
<span class="st" style="left:588px;top:18px">Primer punto de esquina</span>
<svg style="left:716px;top:7px" width="20" height="32" viewBox="0 0 20 32"><rect x="1.6" y="1.4" width="16.8" height="28.4" rx="8.2" fill="#fff" stroke="#3a3a3a" stroke-width="0.9"/><path d="M1.6 12.6H18.4M10 1.4V12.6" stroke="#222" stroke-width="1"/><rect x="8.3" y="3.6" width="3.4" height="6.6" rx="1.7" fill="#fff" stroke="#222" stroke-width="1"/></svg>
<span class="st" style="left:754px;top:18px">Cancelar</span>
<div class="dot" style="left:940px;top:21px"></div>
<span class="st" style="left:949px;top:18px">No hay entidades seleccionadas.</span>
<div class="dot" style="left:1269px;top:21px"></div>
</div>
</div>
</body></html>
